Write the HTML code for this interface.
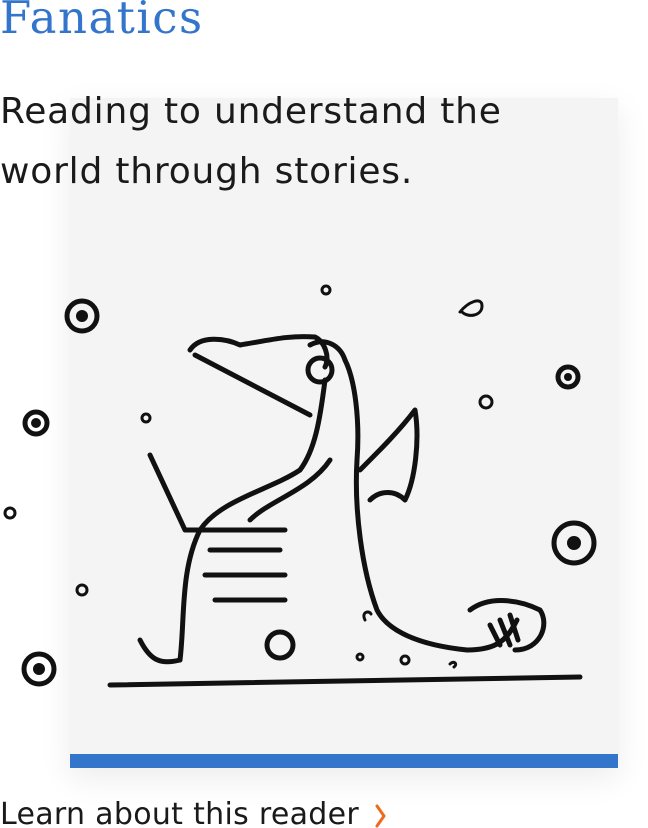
<!DOCTYPE html>
<html><head><meta charset="utf-8"><style>
html,body{margin:0;padding:0;width:648px;height:828px;overflow:hidden;background:#fff;position:relative}
.t{position:absolute;left:0;top:-12px;font-family:"DejaVu Serif","Liberation Serif",serif;font-size:45px;color:#3475cc;line-height:60px;letter-spacing:1.5px}
.card{position:absolute;left:70px;top:98px;width:548px;height:670px;background:#f4f4f4;box-shadow:0 10px 30px rgba(0,0,0,0.08)}
.bar{position:absolute;left:0;bottom:0;width:100%;height:14px;background:#3475cc}
.p{position:absolute;left:0;top:82px;font-family:"DejaVu Sans","Liberation Sans",sans-serif;font-size:36px;line-height:60px;color:#1a1a1a;letter-spacing:0.8px}
.l{position:absolute;left:0;top:795px;font-family:"DejaVu Sans","Liberation Sans",sans-serif;font-size:30px;line-height:40px;color:#1a1a1a;letter-spacing:0.3px}
svg{position:absolute;left:0;top:0}
</style></head><body>
<div class="card"><div class="bar"></div></div>
<div class="t">Fanatics</div>
<div class="p">Reading to understand the<br>world through stories.</div>
<svg width="648" height="828" fill="none" stroke="#111" stroke-linecap="round" stroke-linejoin="round">
<g stroke-width="5">
<circle cx="82" cy="316" r="15"/><circle cx="36" cy="423" r="11"/><circle cx="39" cy="669" r="15"/>
<circle cx="574" cy="543" r="20"/><circle cx="568" cy="377" r="10"/><circle cx="280" cy="645" r="13"/>
</g>
<g fill="#111" stroke="none"><circle cx="82" cy="316" r="6"/><circle cx="36" cy="423" r="5"/><circle cx="39" cy="669" r="6"/><circle cx="574" cy="543" r="7"/><circle cx="568" cy="377" r="4"/></g>
<g stroke-width="3"><circle cx="326" cy="290" r="4"/><circle cx="146" cy="418" r="4"/><circle cx="486" cy="402" r="6"/><circle cx="82" cy="590" r="5"/><circle cx="10" cy="513" r="5"/><path d="M460 312c8-10 22-16 22-6s-14 12-20 6"/>
<circle cx="405" cy="660" r="4"/><circle cx="360" cy="657" r="3"/><path d="M450 664c4-4 8 0 4 3M365 620c-4-8 4-10 6-6"/></g>
<g stroke-width="5">
<path d="M110 685L580 677"/>
<path d="M190 350c10-15 35-12 50-5c30-5 50-10 75-8c10 5 15 20 10 30"/>
<path d="M195 355l115 60"/>
<path d="M310 345c15-8 30 0 35 15"/>
<path d="M345 360c10 20 15 60 12 100c-3 50 5 110 20 150c10 20 40 35 90 40c30 0 40-10 50-30"/>
<path d="M325 380c-5 40-10 70-25 90c-30 20-80 30-100 60c-20 40-15 90-20 130"/>
<path d="M180 660c-20 5-30 0-40-20"/>
<path d="M360 470c20-20 40-40 55-60c5 30 0 70-10 90c-10-10-25-10-35 0"/>
<path d="M150 455l35 75h100"/>
<path d="M250 520c20-20 60-30 80-60"/>
<path d="M470 610c20-15 50-10 70 0c10 15 0 40-25 40"/>
<path d="M490 625l10 20M500 620l10 25M510 615l8 25"/>
<path d="M210 550h70M205 575h80M215 600h70"/>
<circle cx="320" cy="370" r="12"/>
</g>
<path d="M377 806l7 10-7 10" stroke="#f06a1d" stroke-width="3"/>
</svg>
<div class="l">Learn about this reader</div>
</body></html>
